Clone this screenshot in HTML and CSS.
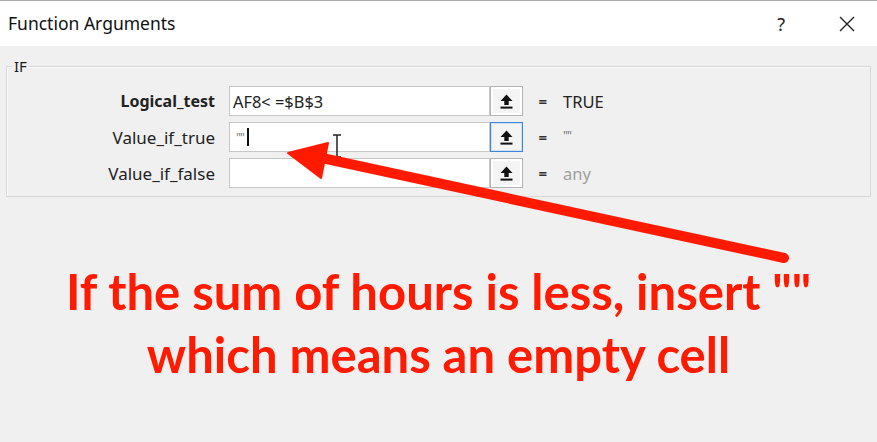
FILE: index.html
```html
<!DOCTYPE html>
<html>
<head>
<meta charset="utf-8">
<link rel="stylesheet" href="styles.css">
</head>
<body>
<div class="dialog">
  <header class="titlebar">
    <span class="title">Function Arguments</span>
    <div class="controls">
      <span class="help">?</span>
      <svg class="close" width="16" height="16" viewBox="0 0 16 16"><path d="M1 1L15 15M15 1L1 15" stroke="#222" stroke-width="1.4" fill="none"/></svg>
    </div>
  </header>
  <main class="body">
    <fieldset class="group">
      <legend class="legend">IF</legend>
      <div class="rows">
        <label class="lbl bold">Logical_test</label>
        <div class="combo">
          <div class="field"><span class="fieldtext">AF8&lt; =$B$3</span></div>
          <button class="pick"><svg width="13" height="15" viewBox="0 0 13 15"><path d="M6.5 0.5L12.5 7H8.7V11H4.3V7H0.5Z" fill="#111"/><rect x="0.5" y="12.6" width="12" height="2" fill="#111"/></svg></button>
        </div>
        <span class="eq">=</span>
        <span class="val">TRUE</span>

        <label class="lbl">Value_if_true</label>
        <div class="combo">
          <div class="field"><span class="fieldtext small">""</span><span class="caret"></span></div>
          <button class="pick focus"><svg width="13" height="15" viewBox="0 0 13 15"><path d="M6.5 0.5L12.5 7H8.7V11H4.3V7H0.5Z" fill="#111"/><rect x="0.5" y="12.6" width="12" height="2" fill="#111"/></svg></button>
        </div>
        <span class="eq">=</span>
        <span class="val dq">""</span>

        <label class="lbl">Value_if_false</label>
        <div class="combo">
          <div class="field"></div>
          <button class="pick"><svg width="13" height="15" viewBox="0 0 13 15"><path d="M6.5 0.5L12.5 7H8.7V11H4.3V7H0.5Z" fill="#111"/><rect x="0.5" y="12.6" width="12" height="2" fill="#111"/></svg></button>
        </div>
        <span class="eq">=</span>
        <span class="val muted">any</span>
      </div>
    </fieldset>
    <div class="note">
      <p class="line">If the sum of hours is less, insert ""</p>
      <p class="line">which means an empty cell</p>
    </div>
  </main>
  <svg class="overlay" width="877" height="442" viewBox="0 0 877 442">
    <g class="ibeam" stroke="#222" stroke-width="1.5" fill="none">
      <path d="M333 135H341M337 135V157M333 157H341"/>
    </g>
    <path d="M784 258L322 158" stroke="#ff1a00" stroke-width="10" stroke-linecap="round" fill="none"/>
    <path d="M288 153L328 143L321 178Z" fill="#ff1a00" stroke="#ff1a00" stroke-width="2" stroke-linejoin="round"/>
  </svg>
</div>
</body>
</html>
```
FILE: styles.css
```css
* { box-sizing: border-box; }
html, body { margin: 0; padding: 0; }
body {
  width: 877px;
  height: 442px;
  overflow: hidden;
  background: #f0f0f0;
  font-family: "Noto Sans", "Open Sans", sans-serif;
  color: #1a1a1a;
}
.dialog { position: relative; width: 877px; height: 442px; }
.titlebar {
  height: 46px;
  background: #ffffff;
  border-top: 1px solid #a8a8a8;
  display: flex;
  align-items: center;
  justify-content: space-between;
  padding: 0 22px 0 8px;
}
.title { font-size: 17.5px; color: #111; margin-top: -2px; }
.controls { display: flex; align-items: center; gap: 54px; }
.help { font-size: 18px; color: #222; }
.close { display: block; }
.body { padding: 10px 6px 0 6px; }
.group {
  margin: 0;
  width: 865px;
  height: 141px;
  border: 1px solid #d8d8d8;
  box-shadow: inset 1px 1px 0 #fafafa;
  padding: 10px 0 0 0;
}
.legend {
  font-size: 15px;
  padding: 0 2px;
  margin-left: 5px;
  color: #1a1a1a;
}
.rows {
  display: grid;
  grid-template-columns: 222px 294px 40px auto;
  grid-auto-rows: 30px;
  row-gap: 6px;
  align-items: center;
}
.lbl {
  font-size: 17px;
  text-align: right;
  padding-right: 14px;
  color: #222;
}
.lbl.bold { font-weight: 700; font-size: 16px; }
.combo { display: flex; height: 30px; }
.field {
  height: 30px;
  width: 261px;
  background: #fff;
  border: 1px solid #c8c8c8;
  display: flex;
  align-items: center;
  padding-left: 3px;
}
.fieldtext { font-size: 16.4px; color: #222; }
.fieldtext.small { font-size: 12px; color: #777; margin-left: 3px; letter-spacing: -1px; }
.caret { width: 2px; height: 18px; background: #111; margin-left: 3px; }
.pick {
  width: 33px;
  height: 30px;
  border: 1px solid #b4b4b4;
  background: #f4f4f4;
  box-shadow: inset 0 0 0 2px #fff;
  display: flex;
  align-items: center;
  justify-content: center;
  padding: 0;
}
.pick.focus { border-color: #3b86d6; box-shadow: inset 0 0 0 1px #cfe2f5; }
.eq { font-size: 15px; color: #333; text-align: right; padding-right: 16px; font-weight: 700; }
.val { font-size: 16.5px; color: #222; }
.val.dq { font-size: 12px; color: #777; letter-spacing: -1px; align-self: start; margin-top: 5px; }
.val.muted { color: #a0a0a0; }
.note {
  text-align: center;
  color: #ff1a00;
  font-family: Lato, "Open Sans", sans-serif;
  font-weight: 700;
  font-size: 49px;
  margin-top: 63px;
}
.line { margin: 0; line-height: 63px; }
.overlay { position: absolute; left: 0; top: 0; pointer-events: none; }
```
